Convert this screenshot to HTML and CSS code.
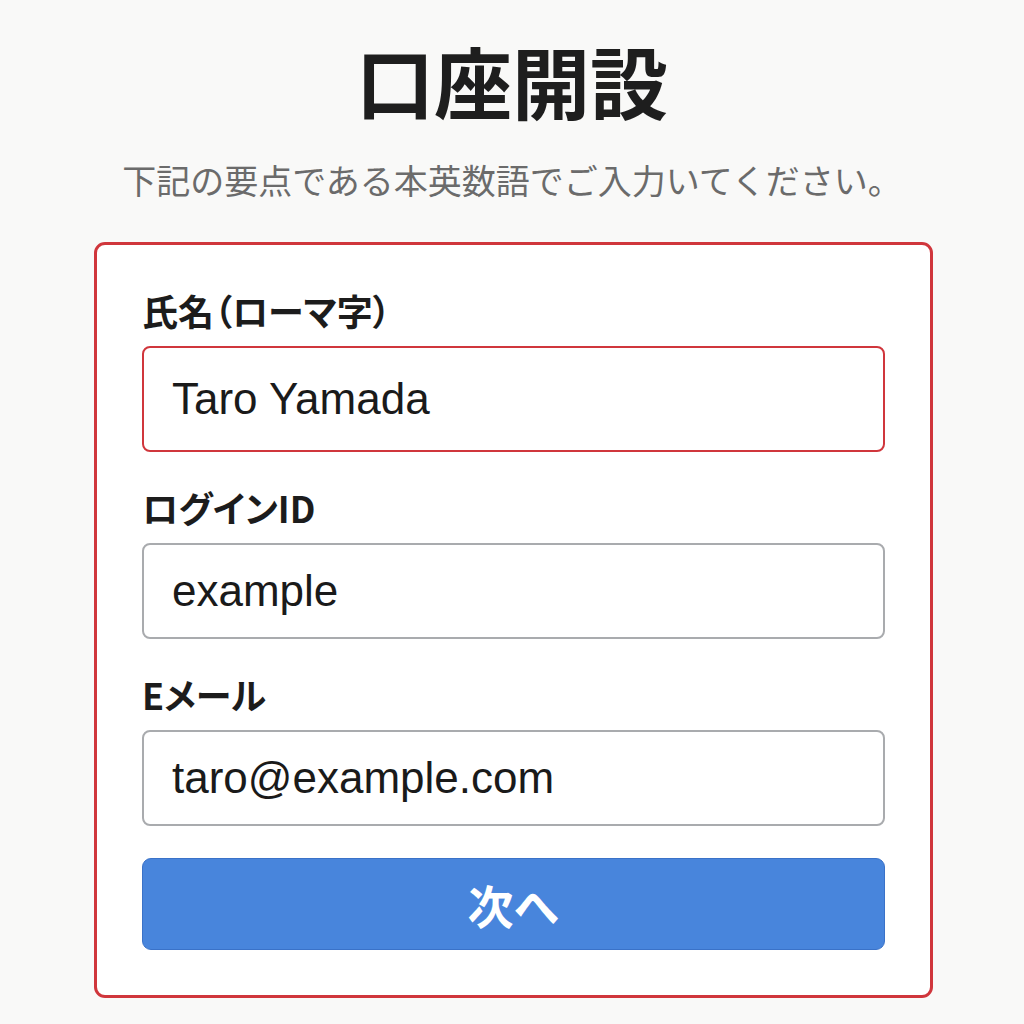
FILE: index.html
```html
<!DOCTYPE html>
<html lang="ja">
<head>
  <meta charset="UTF-8" />
  <title>口座開設</title>
  <link rel="stylesheet" href="styles.css">
</head>
<body>

<!-- Header -->
<header class="page-head">
  <h1>口座開設</h1>
  <p class="lead">下記の要点である本英数語でご入力いてください。</p>
</header>

<!-- Signup Form -->
<form class="card" onsubmit="return false;">
  <label class="field">
    <span class="field-label">氏名（ローマ字）</span>
    <input class="field-input is-error" type="text" name="name" value="Taro Yamada">
  </label>
  <label class="field">
    <span class="field-label">ログインID</span>
    <input class="field-input" type="text" name="login" value="example">
  </label>
  <label class="field">
    <span class="field-label">Eメール</span>
    <input class="field-input" type="email" name="email" value="taro@example.com">
  </label>
  <button class="btn-next" type="submit">次へ</button>
</form>

</body>
</html>
```

FILE: styles.css
```css
body {
  margin: 0;
  background-color: #f9f9f8;
  font-family: "Noto Sans CJK JP", "Liberation Sans", sans-serif;
  color: #1c1c1c;
}
.page-head {
  text-align: center;
  padding-top: 30px;
}
.page-head h1 {
  margin: 0;
  font-size: 78px;
  line-height: 100px;
  font-weight: 700;
  color: #1e1e1e;
}
.lead {
  margin: 30px 0 0;
  font-size: 34px;
  line-height: 40px;
  color: #6b6b6b;
}
.card {
  width: 839px;
  box-sizing: border-box;
  margin: 42px 0 0 94px;
  padding: 45px 45px 45px;
  background: #fff;
  border: 3px solid #d0363c;
  border-radius: 11px;
  display: flex;
  flex-direction: column;
}
.field {
  display: flex;
  flex-direction: column;
  margin-bottom: 35px;
}
.field-label {
  font-size: 36px;
  line-height: 40px;
  font-weight: 700;
  margin-bottom: 16px;
  font-feature-settings: "palt";
}
.field-input {
  height: 96px;
  box-sizing: border-box;
  padding: 0 28px;
  border: 2px solid #a9abae;
  border-radius: 8px;
  font-family: "Liberation Sans", "Noto Sans CJK JP", sans-serif;
  font-size: 44px;
  color: #1a1a1a;
  background: #fff;
  outline: none;
}
.field-input.is-error {
  height: 106px;
  border-color: #d0363c;
}
.btn-next {
  margin-top: -3px;
  height: 92px;
  border: 1px solid #3a72c8;
  border-radius: 9px;
  background: #4885dc;
  color: #fff;
  font-family: "Noto Sans CJK JP", sans-serif;
  font-size: 46px;
  font-weight: 700;
  cursor: pointer;
}
```
